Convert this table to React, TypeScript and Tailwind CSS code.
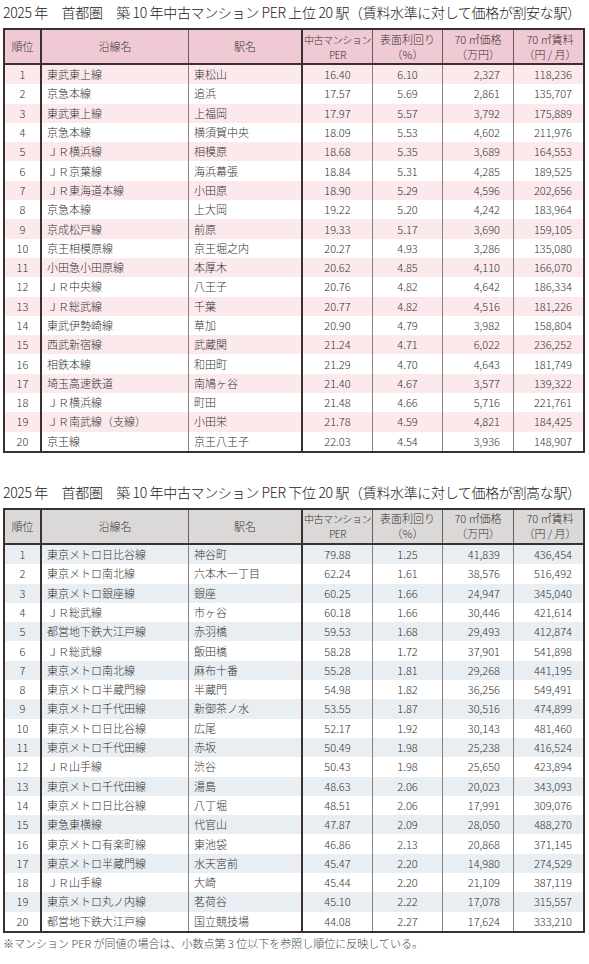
type Row = [string, string, string, string, string, string, string]

const cheap: Row[] = [
  ['1', '東武東上線', '東松山', '16.40', '6.10', '2,327', '118,236'],
  ['2', '京急本線', '追浜', '17.57', '5.69', '2,861', '135,707'],
  ['3', '東武東上線', '上福岡', '17.97', '5.57', '3,792', '175,889'],
  ['4', '京急本線', '横須賀中央', '18.09', '5.53', '4,602', '211,976'],
  ['5', 'ＪＲ横浜線', '相模原', '18.68', '5.35', '3,689', '164,553'],
  ['6', 'ＪＲ京葉線', '海浜幕張', '18.84', '5.31', '4,285', '189,525'],
  ['7', 'ＪＲ東海道本線', '小田原', '18.90', '5.29', '4,596', '202,656'],
  ['8', '京急本線', '上大岡', '19.22', '5.20', '4,242', '183,964'],
  ['9', '京成松戸線', '前原', '19.33', '5.17', '3,690', '159,105'],
  ['10', '京王相模原線', '京王堀之内', '20.27', '4.93', '3,286', '135,080'],
  ['11', '小田急小田原線', '本厚木', '20.62', '4.85', '4,110', '166,070'],
  ['12', 'ＪＲ中央線', '八王子', '20.76', '4.82', '4,642', '186,334'],
  ['13', 'ＪＲ総武線', '千葉', '20.77', '4.82', '4,516', '181,226'],
  ['14', '東武伊勢崎線', '草加', '20.90', '4.79', '3,982', '158,804'],
  ['15', '西武新宿線', '武蔵関', '21.24', '4.71', '6,022', '236,252'],
  ['16', '相鉄本線', '和田町', '21.29', '4.70', '4,643', '181,749'],
  ['17', '埼玉高速鉄道', '南鳩ヶ谷', '21.40', '4.67', '3,577', '139,322'],
  ['18', 'ＪＲ横浜線', '町田', '21.48', '4.66', '5,716', '221,761'],
  ['19', 'ＪＲ南武線（支線）', '小田栄', '21.78', '4.59', '4,821', '184,425'],
  ['20', '京王線', '京王八王子', '22.03', '4.54', '3,936', '148,907'],
]

const pricey: Row[] = [
  ['1', '東京メトロ日比谷線', '神谷町', '79.88', '1.25', '41,839', '436,454'],
  ['2', '東京メトロ南北線', '六本木一丁目', '62.24', '1.61', '38,576', '516,492'],
  ['3', '東京メトロ銀座線', '銀座', '60.25', '1.66', '24,947', '345,040'],
  ['4', 'ＪＲ総武線', '市ヶ谷', '60.18', '1.66', '30,446', '421,614'],
  ['5', '都営地下鉄大江戸線', '赤羽橋', '59.53', '1.68', '29,493', '412,874'],
  ['6', 'ＪＲ総武線', '飯田橋', '58.28', '1.72', '37,901', '541,898'],
  ['7', '東京メトロ南北線', '麻布十番', '55.28', '1.81', '29,268', '441,195'],
  ['8', '東京メトロ半蔵門線', '半蔵門', '54.98', '1.82', '36,256', '549,491'],
  ['9', '東京メトロ千代田線', '新御茶ノ水', '53.55', '1.87', '30,516', '474,899'],
  ['10', '東京メトロ日比谷線', '広尾', '52.17', '1.92', '30,143', '481,460'],
  ['11', '東京メトロ千代田線', '赤坂', '50.49', '1.98', '25,238', '416,524'],
  ['12', 'ＪＲ山手線', '渋谷', '50.43', '1.98', '25,650', '423,894'],
  ['13', '東京メトロ千代田線', '湯島', '48.63', '2.06', '20,023', '343,093'],
  ['14', '東京メトロ日比谷線', '八丁堀', '48.51', '2.06', '17,991', '309,076'],
  ['15', '東急東横線', '代官山', '47.87', '2.09', '28,050', '488,270'],
  ['16', '東京メトロ有楽町線', '東池袋', '46.86', '2.13', '20,868', '371,145'],
  ['17', '東京メトロ半蔵門線', '水天宮前', '45.47', '2.20', '14,980', '274,529'],
  ['18', 'ＪＲ山手線', '大崎', '45.44', '2.20', '21,109', '387,119'],
  ['19', '東京メトロ丸ノ内線', '茗荷谷', '45.10', '2.22', '17,078', '315,557'],
  ['20', '都営地下鉄大江戸線', '国立競技場', '44.08', '2.27', '17,624', '333,210'],
]

const cols = 'grid grid-cols-[37px_147px_114px_70px_70px_71px_72px]'

const RankTable = ({ rows, head, stripe }: { rows: Row[]; head: string; stripe: string }) => {
  return (
    <div className="w-[582px] border-2 border-[#3a3030]">
      <div className={`${cols} h-[35px] ${head} border-b-2 border-[#3a3030] text-[11px] leading-[15px] font-light text-[#3a3333]`}>
        <div className="flex items-center justify-center border-r-2 border-[#3a3030]">順位</div>
        <div className="flex items-center justify-center border-r border-[#6b5c5c]">沿線名</div>
        <div className="flex items-center justify-center border-r-2 border-[#3a3030]">駅名</div>
        <div className="flex flex-col items-center justify-center border-r border-[#6b5c5c] text-[10px] tracking-[-0.4px]">
          <span>中古マンション</span>
          <span>PER</span>
        </div>
        <div className="flex flex-col items-center justify-center border-r border-[#6b5c5c]">
          <span>表面利回り</span>
          <span>（%）</span>
        </div>
        <div className="flex flex-col items-center justify-center border-r border-[#6b5c5c]">
          <span>70 ㎡価格</span>
          <span>（万円）</span>
        </div>
        <div className="flex flex-col items-center justify-center">
          <span>70 ㎡賃料</span>
          <span>（円 / 月）</span>
        </div>
      </div>
      {rows.map((r, i) => (
        <div
          key={r[0]}
          className={`${cols} h-[19.3px] text-[11px] leading-none font-light text-[#333] ${i % 2 === 0 ? stripe : 'bg-white'}`}
        >
          <div className="flex items-center justify-center border-r-2 border-[#3a3030]">{r[0]}</div>
          <div className="flex items-center pl-[5px] border-r border-[#8a8080] whitespace-nowrap">{r[1]}</div>
          <div className="flex items-center pl-[5px] border-r-2 border-[#3a3030] whitespace-nowrap">{r[2]}</div>
          <div className="flex items-center justify-center border-r border-[#8a8080]">{r[3]}</div>
          <div className="flex items-center justify-center border-r border-[#8a8080]">{r[4]}</div>
          <div className="flex items-center justify-end pr-[13px] border-r border-[#8a8080]">{r[5]}</div>
          <div className="flex items-center justify-end pr-[14px]">{r[6]}</div>
        </div>
      ))}
    </div>
  )
}

export default function App() {
  return (
    <div className="w-[589px] h-[964px] bg-white pl-[3px] pt-[3px] font-['Noto_Sans_CJK_JP',sans-serif]">
      <h2 className="text-[14px] leading-[18px] font-light text-[#222] whitespace-nowrap tracking-[-0.35px]">
        2025 年　首都圏　築 10 年中古マンション PER 上位 20 駅（賃料水準に対して価格が割安な駅）
      </h2>
      <div className="mt-[7px]">
        <RankTable rows={cheap} head="bg-[#efc9d3]" stripe="bg-[#fce9ec]" />
      </div>
      <h2 className="mt-[30px] text-[14px] leading-[18px] font-light text-[#222] whitespace-nowrap tracking-[-0.35px]">
        2025 年　首都圏　築 10 年中古マンション PER 下位 20 駅（賃料水準に対して価格が割高な駅）
      </h2>
      <div className="mt-[7px]">
        <RankTable rows={pricey} head="bg-[#dbd9d8]" stripe="bg-[#e9eef2]" />
      </div>
      <p className="mt-[3px] text-[11px] leading-[14px] font-light text-[#444] whitespace-nowrap">
        ※マンション PER が同値の場合は、小数点第 3 位以下を参照し順位に反映している。
      </p>
    </div>
  )
}
